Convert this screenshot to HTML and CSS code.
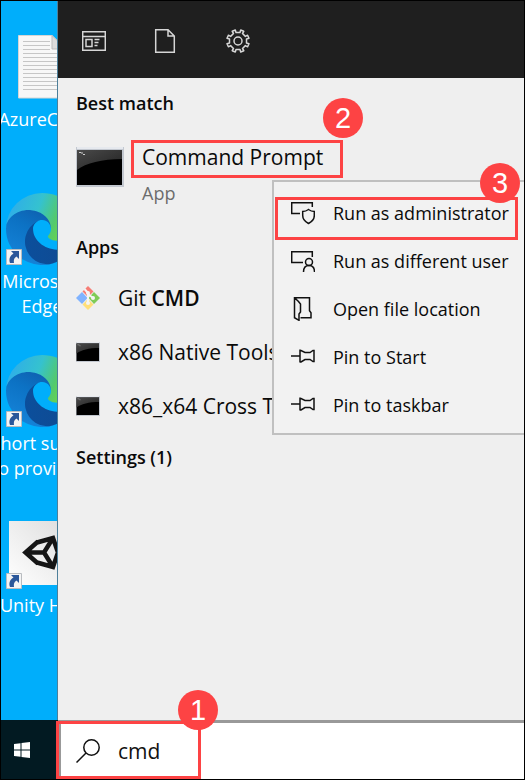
FILE: index.html
```html
<!DOCTYPE html>
<html lang="en">
<head>
<meta charset="utf-8">
<title>Windows Search</title>
<meta name="viewport" content="width=device-width, initial-scale=1">
<link rel="stylesheet" href="styles.css">
</head>
<body>
<svg class="defs" aria-hidden="true">
  <defs>
    <linearGradient id="edge-dark" x1="60" y1="177" x2="237" y2="177" gradientUnits="userSpaceOnUse">
      <stop offset="0" stop-color="#0b4f9c"/><stop offset="1" stop-color="#104a92"/>
    </linearGradient>
    <linearGradient id="edge-mid" x1="140" y1="60" x2="50" y2="240" gradientUnits="userSpaceOnUse">
      <stop offset="0" stop-color="#0f5fae"/><stop offset="0.4" stop-color="#0c72c4"/><stop offset="1" stop-color="#1583d8"/>
    </linearGradient>
    <linearGradient id="edge-top" x1="20" y1="60" x2="200" y2="130" gradientUnits="userSpaceOnUse">
      <stop offset="0" stop-color="#2fb0e6"/><stop offset="0.45" stop-color="#35c2cf"/><stop offset="0.8" stop-color="#52c96f"/><stop offset="1" stop-color="#68d54c"/>
    </linearGradient>
    <linearGradient id="glare" x1="0" y1="0" x2="1" y2="1">
      <stop offset="0" stop-color="#4a4a4a"/><stop offset="1" stop-color="#222"/>
    </linearGradient>
    <linearGradient id="tile" x1="0" y1="1" x2="1" y2="0">
      <stop offset="0" stop-color="#fff"/><stop offset="1" stop-color="#dcdcdc"/>
    </linearGradient>
    <symbol id="edge" viewBox="0 0 256 256">
      <path fill="url(#edge-dark)" d="M231 190.500c-3.400 1.800-6.900 3.400-10.500 4.700a101.800 101.800 0 0 1-35.900 6.500c-47.300 0-88.500-32.600-88.500-74.300a31.500 31.500 0 0 1 16.400-27.300C69.700 101.900 58.700 146.500 58.700 172.600c0 73.900 68.100 81.400 82.800 81.400 7.900 0 19.800-2.300 27-4.600l1.300-.4a128.300 128.300 0 0 0 66.600-52.800 4 4 0 0 0-5.400-5.700z"/>
      <path fill="url(#edge-mid)" d="M105.700 241.400a79.200 79.200 0 0 1-22.700-21.300 80.700 80.700 0 0 1 29.500-120c3.100-1.500 8.500-4.100 15.600-4a32.400 32.400 0 0 1 25.700 13 31.900 31.900 0 0 1 6.300 18.700c0-.2 24.500-79.600-80-79.600-43.900 0-80 41.600-80 78.200a130.200 130.200 0 0 0 12.100 56 128 128 0 0 0 156.400 67 75.500 75.500 0 0 1-62.800-8z"/>
      <path fill="url(#edge-top)" d="M152.300 148.900c-.8 1-3.300 2.500-3.300 5.700 0 2.600 1.700 5.200 4.800 7.300 14.400 10.100 41.600 8.700 41.700 8.700a59.600 59.600 0 0 0 30.300-8.300A61.400 61.400 0 0 0 256 109.400c.3-22.400-8-37.300-11.300-43.900C223.500 23.900 177.700 0 128 0A128 128 0 0 0 0 126.200c.5-36.500 36.800-66 80-66 3.500 0 23.500.3 42 10 16.300 8.600 24.900 19 30.800 29.300 6.200 10.700 7.300 24.100 7.300 29.500 0 5.300-2.700 13.300-7.800 19.900z"/>
    </symbol>
    <symbol id="shortcut" viewBox="0 0 16 16">
      <path fill="#f4f4f4" stroke="#b9bcc0" d="M.5.5h15v15H.5z"/>
      <path fill="#2b579a" d="M5 2h8v8l-2.500-2.500C8 9 7.500 11 8 14H4C2.500 10 4 6.500 7.500 4.500z"/>
    </symbol>
    <symbol id="console" viewBox="0 0 48 40">
      <path fill="#c3c8d0" d="M0 0h48v40H0z"/>
      <path fill="#e6e9ee" d="M1 0h46v2H1z"/>
      <path fill="#000" d="M1 3h45v35H1z"/>
      <path fill="url(#glare)" d="M1 3h45v9C26 12 10 16 1 23z"/>
      <path stroke="#ccc" fill="none" d="M3 5.500h2M6 5v2M7 7.500h2"/>
    </symbol>
    <symbol id="pin" viewBox="0 0 24 24">
      <path d="M0 11h9M9 4.500v13M9 5.500h1l4 2h5l3-2h1v11h-1l-3-2h-5l-4 2.500H9"/>
    </symbol>
  </defs>
</svg>

<main class="desktop" aria-label="Desktop">
  <div class="shortcut shortcut-document">
    <svg class="shortcut-icon" viewBox="0 0 72 64" aria-hidden="true">
      <path fill="#f7f7f7" stroke="#d5d5d5" d="M12.500.5H46L60 14v49H12.500z"/>
      <path fill="#dcdcdc" stroke="#bbb" d="M46 .5V14h14z"/>
      <path stroke="#c6c6c6" fill="none" d="M17 6.500h27M17 10.500h27M17 14.500h27M17 18.500h39M17 22.500h39M17 26.500h39M17 30.500h39M17 34.500h39M17 38.500h39M17 42.500h39M17 46.500h39M17 50.500h39M17 54.500h39"/>
    </svg>
    <span class="shortcut-label">AzureCrea</span>
  </div>
  <div class="shortcut shortcut-edge">
    <svg class="shortcut-icon" aria-hidden="true"><use href="#edge"/></svg>
    <svg class="shortcut-arrow" aria-hidden="true"><use href="#shortcut"/></svg>
    <span class="shortcut-label">Microsoft<br>Edge</span>
  </div>
  <div class="shortcut shortcut-guide">
    <svg class="shortcut-icon" aria-hidden="true"><use href="#edge"/></svg>
    <svg class="shortcut-arrow" aria-hidden="true"><use href="#shortcut"/></svg>
    <span class="shortcut-label">Short suppo<br>to provide a</span>
  </div>
  <div class="shortcut shortcut-unity">
    <svg class="shortcut-icon" viewBox="0 0 72 64" aria-hidden="true">
      <path fill="url(#tile)" d="M3 0h64v64H3z"/>
      <path fill="none" stroke="#151515" stroke-width="4.500" d="M31 21.500L47 17l5 14.500L47 46l-16-4.500M32 20.500L19.500 31.500 32 42.500M19.500 31.500H38L47 17M38 31.500L47 46"/>
    </svg>
    <svg class="shortcut-arrow" aria-hidden="true"><use href="#shortcut"/></svg>
    <span class="shortcut-label">Unity Hub</span>
  </div>
</main>

<section class="panel" aria-label="Search results">
  <header class="filters">
    <button class="filter" type="button" aria-label="Apps">
      <svg viewBox="0 0 24 24" aria-hidden="true"><path d="M.7 2.700h22.600v18.600H.7zM.7 7.500h22.600M4 10.500h6v7H4zM12.500 10.500h5M12.500 13.500h4M12.500 16.500h3"/></svg>
    </button>
    <button class="filter" type="button" aria-label="Documents">
      <svg viewBox="0 0 24 24" aria-hidden="true"><path d="M1.700.7H14l6.300 6.300v16.300H1.700zM14 .7V7h6.300"/></svg>
    </button>
    <button class="filter" type="button" aria-label="Settings">
      <svg viewBox="0 0 24 24" aria-hidden="true"><circle cx="12" cy="12" r="4"/><path d="M10 3.500L9.300 1 6.200 2.300l1.300 2.200-2.900 2.900-2.200-1.200L1 9.200l2.500.8v4l-2.500.8 1.400 3 2.200-1.200 2.900 2.900-1.300 2.200L9.300 23l.7-2.500h4l.7 2.500 3.100-1.300-1.300-2.200 2.900-2.900 2.200 1.200 1.400-3-2.500-.8v-4l2.500-.8-1.400-3-2.200 1.200-2.900-2.900 1.300-2.200L14.700 1 14 3.500z" stroke-linejoin="round"/></svg>
    </button>
  </header>

  <div class="results">
    <h2 class="group-title">Best match</h2>
    <div class="best">
      <svg class="best-icon" aria-hidden="true"><use href="#console"/></svg>
      <div class="best-text">
        <a class="best-name" href="#">Command Prompt</a>
        <span class="best-kind">App</span>
        <span class="step step-2">2</span>
      </div>
    </div>

    <h2 class="group-title">Apps</h2>
    <a class="result" href="#">
      <svg class="result-icon" viewBox="0 0 24 24" aria-hidden="true">
        <path fill="#f67d75" d="M12 0l5.500 5.500L12 11 6.500 5.500z"/><path fill="#80b3ff" d="M6 6l5.500 6L6 18 0 12z"/><path fill="#7fcb57" d="M18 6l6 6-6 6-5.500-6z"/><path fill="#ffdf7a" d="M12 13l5.500 5.500L12 24l-5.500-5.500z"/>
        <path stroke="#f5f5f5" stroke-width="2" fill="none" d="M8.500 3l3.500 4v10M12 8l5 4"/><circle cx="12" cy="7" r="2" fill="#f5f5f5"/><circle cx="12" cy="17" r="2" fill="#f5f5f5"/><circle cx="17" cy="12" r="2" fill="#f5f5f5"/>
      </svg>
      <span>Git <b>CMD</b></span>
    </a>
    <a class="result" href="#">
      <svg class="result-icon" aria-hidden="true"><use href="#console"/></svg>
      <span>x86 Native Tools</span>
    </a>
    <a class="result" href="#">
      <svg class="result-icon" aria-hidden="true"><use href="#console"/></svg>
      <span>x86_x64 Cross To</span>
    </a>
    <h2 class="group-title">Settings (1)</h2>
  </div>

  <div class="menu" role="menu">
    <button class="menu-item marked" type="button" role="menuitem">
      <svg viewBox="0 0 24 24" aria-hidden="true"><path d="M9 12.500H.7V1.700h20.600V6M17.500 8.500c2 1.500 3.500 2 5.800 2v4c0 3.500-2 6-5.800 8-3.800-2-5.800-4.500-5.800-8v-4c2.300 0 3.800-.5 5.800-2z"/></svg>
      <span>Run as administrator</span>
    </button>
    <button class="menu-item" type="button" role="menuitem">
      <svg viewBox="0 0 24 24" aria-hidden="true"><path d="M12 13.500H.7V2.700h20.600V8M12.500 23c0-4 2-6.500 5.500-6.500s5.500 2.500 5.500 6.500"/><circle cx="18" cy="13" r="3.500"/></svg>
      <span>Run as different user</span>
    </button>
    <button class="menu-item" type="button" role="menuitem">
      <svg viewBox="0 0 24 24" aria-hidden="true"><path d="M3.500.7h15v13l1.500 2v5H9.500M3.500.7v20L8 23.300V17l1.500-2V7L7.500 4.500z"/></svg>
      <span>Open file location</span>
    </button>
    <button class="menu-item" type="button" role="menuitem">
      <svg aria-hidden="true"><use href="#pin"/></svg>
      <span>Pin to Start</span>
    </button>
    <button class="menu-item" type="button" role="menuitem">
      <svg aria-hidden="true"><use href="#pin"/></svg>
      <span>Pin to taskbar</span>
    </button>
    <span class="step step-3">3</span>
  </div>
</section>

<footer class="taskbar">
  <button class="start" type="button" aria-label="Start">
    <svg viewBox="0 0 16 16" aria-hidden="true"><path fill="#fff" d="M0 2l6.500-.8v6.300H0zM7.500 1L16 0v7.500H7.500zM0 8.500h6.500v6.300L0 14zM7.500 8.500H16V16l-8.500-1z"/></svg>
  </button>
  <div class="search">
    <label class="search-label" for="query" aria-label="Search">
      <svg viewBox="0 0 24 24" aria-hidden="true"><circle cx="15.500" cy="8.500" r="7.700"/><path d="M10 14L.5 23.500"/></svg>
    </label>
    <input id="query" class="search-input" type="text" value="cmd">
    <span class="search-mark"><span class="step step-1">1</span></span>
  </div>
</footer>
</body>
</html>
```

FILE: styles.css
```css
* {
  box-sizing: border-box;
}

body {
  margin: 0;
  min-height: 100vh;
  border: 1px solid #000;
  display: grid;
  grid-template-columns: 57px minmax(0, 1fr);
  grid-template-rows: 1fr 59px;
  font-family: "Open Sans", "Noto Sans", sans-serif;
  font-size: 18px;
  color: #0a0a0a;
  background: #efefef;
}

button {
  border: 0;
  padding: 0;
  background: none;
  font: inherit;
  color: inherit;
}

a {
  color: inherit;
  text-decoration: none;
}

svg {
  display: block;
  flex: none;
}

.defs {
  position: absolute;
  width: 0;
  height: 0;
}

/* Desktop: icons sit freely on the wallpaper */
.desktop {
  position: relative;
  overflow: hidden;
  background: #00aefb;
  border-right: 1px solid #4d7f9a;
}

.shortcut {
  position: absolute;
  left: -13px;
  width: 108px;
  color: #fff;
  line-height: 25px;
  text-align: center;
  white-space: nowrap;
}

.shortcut-document { top: 34px; }
.shortcut-edge { top: 192px; }
.shortcut-guide { top: 354px; }
.shortcut-unity { top: 520px; }

.shortcut-icon {
  width: 72px;
  height: 72px;
  margin: 0 auto 4px;
}

.shortcut-document .shortcut-icon,
.shortcut-unity .shortcut-icon {
  height: 64px;
  margin-bottom: 8px;
}

.shortcut-arrow {
  position: absolute;
  left: 18px;
  top: 56px;
  width: 16px;
  height: 16px;
}

.shortcut-unity .shortcut-arrow {
  top: 52px;
}

.shortcut-label {
  display: block;
}

/* Search panel */
.panel {
  position: relative;
}

.filters {
  display: flex;
  gap: 48px;
  height: 77px;
  padding: 2px 24px 0;
  align-items: center;
  background: #1f1f1f;
}

.filter svg {
  width: 24px;
  height: 24px;
  fill: none;
  stroke: #d6d6d6;
  stroke-width: 1.5;
}

.results {
  padding: 1px 18px 0;
}

.group-title {
  margin: 0;
  font-size: 18px;
  font-weight: 600;
  line-height: 48px;
}

.best {
  display: flex;
  gap: 7px;
  height: 96px;
  padding-top: 13px;
}

.best-icon {
  width: 48px;
  height: 40px;
  margin-top: 7px;
}

.best-text {
  position: relative;
  display: flex;
  flex-direction: column;
  align-items: flex-start;
}

.best-name {
  width: 212px;
  height: 38px;
  padding-left: 8px;
  border: 3px solid #fd4344;
  font-size: 21px;
  line-height: 28px;
  white-space: nowrap;
}

.best-kind {
  padding-left: 11px;
  line-height: 30px;
  color: #6c6c6c;
}

.result {
  display: flex;
  gap: 18px;
  height: 54px;
  align-items: center;
  font-size: 21px;
  white-space: nowrap;
}

.result b {
  font-weight: 600;
}

.result-icon {
  width: 24px;
  height: 24px;
}

/* Context menu */
.menu {
  position: absolute;
  top: 179px;
  left: 214px;
  right: 0;
  padding: 7px 0 4px;
  border: 2px solid #c0c0c0;
  border-right: 0;
  background: #f2f2f2;
}

.menu-item {
  position: relative;
  display: flex;
  gap: 18px;
  width: 100%;
  height: 48px;
  padding-left: 17px;
  align-items: center;
  white-space: nowrap;
}

.menu-item svg {
  width: 24px;
  height: 24px;
  fill: none;
  stroke: #111;
  stroke-width: 1.5;
}

.marked::after {
  content: "";
  position: absolute;
  inset: 8px 6px -3px 1px;
  border: 3px solid #fd4344;
}

/* Numbered step badges */
.step {
  position: absolute;
  width: 40px;
  height: 40px;
  border-radius: 50%;
  background: #fd4344;
  color: #fff;
  font-family: "Liberation Sans", Arial, sans-serif;
  font-size: 29px;
  line-height: 40px;
  text-align: center;
}

.step-1 { top: -34px; right: -20px; }
.step-2 { top: -42px; right: -20px; }
.step-3 { top: -19px; right: 4px; }

/* Taskbar */
.taskbar {
  grid-column: 1 / -1;
  display: flex;
  background: #021a22;
}

.start {
  width: 57px;
  padding-left: 13px;
}

.start svg {
  width: 16px;
  height: 16px;
}

.search {
  position: relative;
  flex: 1;
  display: flex;
  gap: 18px;
  padding-left: 15px;
  align-items: center;
  border: solid #999;
  border-width: 3px 0 0 3px;
  background: #fff;
}

.search-label svg {
  width: 24px;
  height: 24px;
  fill: none;
  stroke: #111;
  stroke-width: 1.5;
}

.search-input {
  flex: 1;
  min-width: 0;
  padding: 0;
  border: 0;
  outline: 0;
  background: none;
  font: inherit;
  font-size: 21px;
  color: #111;
}

.search-mark {
  position: absolute;
  left: -5px;
  top: -2px;
  bottom: 0;
  width: 145px;
  border: 3px solid #fd4344;
  pointer-events: none;
}
```
